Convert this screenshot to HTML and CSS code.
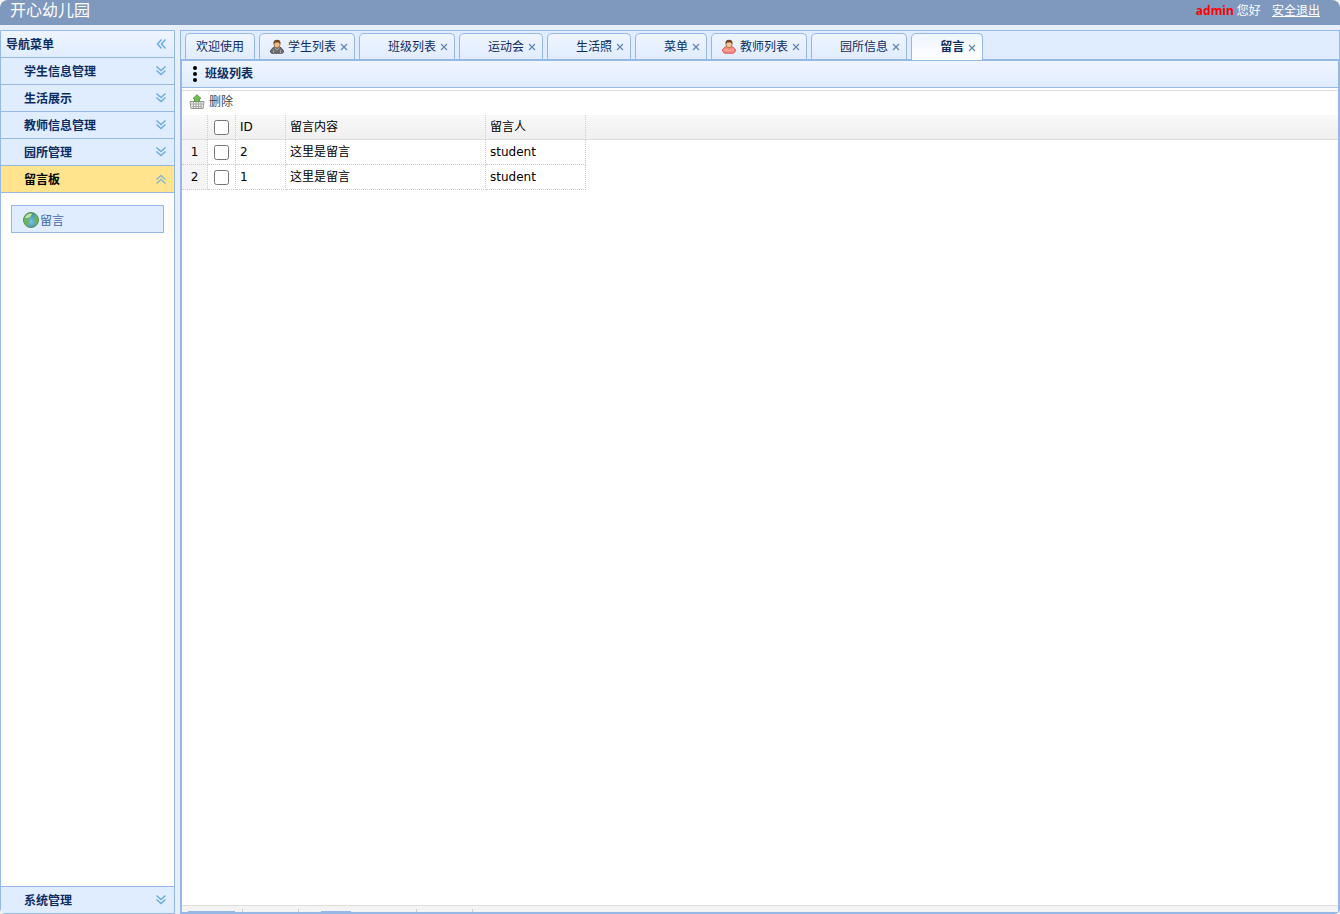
FILE: index.html
```html
<!DOCTYPE html>
<html lang="zh-CN">
<head>
  <meta charset="UTF-8">
  <meta name="viewport" content="width=device-width, initial-scale=1.0">
  <title>开心幼儿园</title>
  <link rel="stylesheet" href="styles.css">
</head>
<body>
  <!-- icons used more than once -->
  <svg class="symbols" aria-hidden="true">
    <symbol id="chevrons" viewBox="0 0 16 16">
      <path d="M3.500 3.500L8 7.500l4.500-4M3.500 7.500l4.500 4 4.500-4" fill="none" stroke="#6caddf" stroke-width="1.5"/>
    </symbol>
    <symbol id="close" viewBox="0 0 8 8">
      <path d="M1 1l6 6M7 1L1 7" fill="none" stroke="#5f83b9" stroke-width="1.2"/>
    </symbol>
  </svg>

  <div class="page">
    <!-- 顶部 -->
    <header class="north">
      <h1>开心幼儿园</h1>
      <div class="user"><strong>admin</strong> 您好 <a href="#">安全退出</a></div>
    </header>

    <div class="main">
      <!-- 导航菜单 -->
      <nav class="west">
        <div class="nav-title">
          <span>导航菜单</span>
          <button type="button" class="collapse" aria-label="收起"><svg class="arrow left"><use href="#chevrons"/></svg></button>
        </div>
        <button type="button" class="nav-item"><span>学生信息管理</span><svg class="arrow"><use href="#chevrons"/></svg></button>
        <button type="button" class="nav-item"><span>生活展示</span><svg class="arrow"><use href="#chevrons"/></svg></button>
        <button type="button" class="nav-item"><span>教师信息管理</span><svg class="arrow"><use href="#chevrons"/></svg></button>
        <button type="button" class="nav-item"><span>园所管理</span><svg class="arrow"><use href="#chevrons"/></svg></button>
        <button type="button" class="nav-item selected"><span>留言板</span><svg class="arrow up"><use href="#chevrons"/></svg></button>
        <div class="nav-body">
          <a href="#" class="nav-link">
            <svg width="18" height="18" viewBox="0 0 18 18">
              <defs>
                <radialGradient id="sea" cx="50%" cy="60%">
                  <stop offset="0" stop-color="#78c3e5"/>
                  <stop offset="1" stop-color="#3f8eb5"/>
                </radialGradient>
              </defs>
              <circle cx="9" cy="9" r="7.5" fill="url(#sea)" stroke="#4f9345"/>
              <path d="M2 9C2 5 5 2 9 2l2 1-2 2-1 2-2 2 1 3-1 3C3 14 2 12 2 9zM12 3c3 1 4 4 4 6 0 3-2 5-4 6l1-4-1-2 1-2z" fill="#6db45a"/>
              <path d="M3 7c1-3 4-5 7-4L8 6l-3 1z" fill="#c3e4b0"/>
            </svg>
            <span>留言</span>
          </a>
        </div>
        <button type="button" class="nav-item last"><span>系统管理</span><svg class="arrow"><use href="#chevrons"/></svg></button>
      </nav>

      <main class="center">
        <ul class="tabs">
          <li><a href="#">欢迎使用</a></li>
          <li>
            <a href="#"><span class="tab-icon"><svg width="16" height="16" viewBox="0 0 16 16">
              <path d="M.5 13c0-2 1.500-4 4-5h5c2.500 1 4 3 4 5l-1 1.200H1.500z" fill="#6d6f70" stroke="#4b4d4e"/>
              <path d="M4.500 8.500L7 11l2.500-2.500M3.500 11v3M10.500 11v3" fill="none" stroke="#a2a5a5"/>
              <ellipse cx="7" cy="5.500" rx="3" ry="3.300" fill="#edbd8c" stroke="#a06d40"/>
              <path d="M3.500 5V3Q4 .8 7 .8T10.500 3v2L9 3.500H5z" fill="#70451f"/>
            </svg></span>学生列表</a>
            <button type="button" aria-label="关闭"><svg><use href="#close"/></svg></button>
          </li>
          <li><a href="#"><span class="tab-icon"></span>班级列表</a><button type="button" aria-label="关闭"><svg><use href="#close"/></svg></button></li>
          <li><a href="#"><span class="tab-icon"></span>运动会</a><button type="button" aria-label="关闭"><svg><use href="#close"/></svg></button></li>
          <li><a href="#"><span class="tab-icon"></span>生活照</a><button type="button" aria-label="关闭"><svg><use href="#close"/></svg></button></li>
          <li><a href="#"><span class="tab-icon"></span>菜单</a><button type="button" aria-label="关闭"><svg><use href="#close"/></svg></button></li>
          <li>
            <a href="#"><span class="tab-icon"><svg width="16" height="16" viewBox="0 0 16 16">
              <path d="M.5 12c0-2 1.500-3.500 4-4.500h5c2.500 1 4 2.500 4 4.500l-2 2.200h-9z" fill="#f98c84" stroke="#d9554f"/>
              <path d="M2.500 10.500Q7 13 11.500 10.500" fill="none" stroke="#ffb0a5"/>
              <ellipse cx="7" cy="5.500" rx="3" ry="3.300" fill="#f3c79a" stroke="#ac7547"/>
              <path d="M3.500 5V3Q4 .8 7 .8T10.500 3v2L9 3.500H5z" fill="#70451f"/>
            </svg></span>教师列表</a>
            <button type="button" aria-label="关闭"><svg><use href="#close"/></svg></button>
          </li>
          <li><a href="#"><span class="tab-icon"></span>园所信息</a><button type="button" aria-label="关闭"><svg><use href="#close"/></svg></button></li>
          <li class="active"><a href="#"><span class="tab-icon"></span>留言</a><button type="button" aria-label="关闭"><svg><use href="#close"/></svg></button></li>
        </ul>

        <section class="panel">
          <h2>
            <svg width="16" height="16" viewBox="0 0 16 16">
              <circle cx="8" cy="2" r="2"/><circle cx="8" cy="8" r="2"/><circle cx="8" cy="14" r="2"/>
            </svg>
            班级列表
          </h2>

          <div class="toolbar">
            <button type="button">
              <svg width="16" height="16" viewBox="0 0 16 16">
                <path d="M1 7.500h14l-1 7H2z" fill="#eeeeec" stroke="#92948f"/>
                <path d="M2 10h12M3 12.500h10M4.500 8v6M7 8v6M9.500 8v6M12 8v6" stroke="#aaaca7" fill="none"/>
                <path d="M8 .7L12 4.500H10.500v3h-5v-3H4z" fill="#75bd53" stroke="#5a9e45"/>
              </svg>
              删除
            </button>
          </div>

          <div class="grid">
            <table>
              <thead>
                <tr>
                  <th class="num"></th>
                  <th class="check"><input type="checkbox" aria-label="全选"></th>
                  <th class="id">ID</th>
                  <th class="message">留言内容</th>
                  <th class="author">留言人</th>
                  <th class="rest"></th>
                </tr>
              </thead>
              <tbody>
                <tr>
                  <td class="num">1</td>
                  <td class="check"><input type="checkbox" aria-label="选择第1行"></td>
                  <td>2</td>
                  <td>这里是留言</td>
                  <td>student</td>
                </tr>
                <tr>
                  <td class="num">2</td>
                  <td class="check"><input type="checkbox" aria-label="选择第2行"></td>
                  <td>1</td>
                  <td>这里是留言</td>
                  <td>student</td>
                </tr>
              </tbody>
            </table>
          </div>

          <!-- 分页 -->
          <div class="pager">
            <select aria-label="每页条数"></select>
            <i class="sep"></i>
            <span class="page-btns"></span>
            <i class="sep"></i>
            <span class="page-num"><input type="text" aria-label="页码"></span>
            <i class="sep"></i>
            <span class="page-btns"></span>
            <i class="sep"></i>
          </div>
        </section>
      </main>
    </div>
  </div>
</body>
</html>
```

FILE: styles.css
```css
* {
  box-sizing: border-box;
}

body {
  margin: 0;
  background: #f3f3f3;
  color: #000;
  font: 12px/16px "DejaVu Sans", "Noto Sans CJK SC", sans-serif;
}

button {
  margin: 0;
  padding: 0;
  border: 0;
  background: none;
  color: inherit;
  font: inherit;
  cursor: pointer;
}

.symbols {
  display: none;
}

.page {
  display: flex;
  flex-direction: column;
  height: 100vh;
  border-radius: 8px 8px 5px 5px;
  overflow: hidden;
  background: #e6eef8;
}

/* header */
.north {
  display: flex;
  justify-content: space-between;
  height: 25px;
  padding: 0 20px 0 10px;
  background: #7f99be;
  color: #fff;
}

.north h1 {
  margin: 0;
  font-size: 16px;
  font-weight: normal;
  line-height: 22px;
}

.user {
  font-family: "Noto Sans", "Noto Sans CJK SC", sans-serif;
  line-height: 21px;
}

.user strong {
  color: #f00;
}

.user a {
  margin-left: 8px;
  color: #fff;
}

.main {
  display: flex;
  flex: 1;
  gap: 5px;
  min-height: 0;
  padding-top: 5px;
}

/* sidebar */
.west {
  display: flex;
  flex-direction: column;
  width: 175px;
  border: 1px solid #95b8e7;
  border-radius: 0 0 0 5px;
  background: #fff;
  color: #0e2d5f;
  font-weight: bold;
}

.nav-title,
.nav-item {
  display: flex;
  justify-content: space-between;
  align-items: center;
  flex: none;
  height: 27px;
  padding: 0 5px;
  border-bottom: 1px solid #95b8e7;
  background: #e0ecff;
}

.nav-title {
  background: linear-gradient(#eff5ff, #e0ecff);
}

.nav-item {
  padding-left: 23px;
  text-align: left;
}

.nav-item.selected {
  background: #ffe48d;
  color: #000;
}

.nav-item.last {
  border-top: 1px solid #95b8e7;
  border-bottom: 0;
}

.west span {
  padding-top: 2px;
}

.arrow {
  display: block;
  width: 16px;
  height: 16px;
}

.arrow.left {
  transform: rotate(90deg);
}

.arrow.up {
  transform: rotate(180deg);
  opacity: 0.8;
}

.nav-body {
  flex: 1;
  padding: 12px 10px;
}

.nav-link {
  display: flex;
  align-items: center;
  height: 28px;
  padding: 2px 0 0 10px;
  border: 1px solid #95b8e7;
  background: #e0ecff;
  color: #416aa3;
  font-weight: normal;
  text-decoration: none;
}

/* tabs */
.center {
  display: flex;
  flex: 1;
  flex-direction: column;
  min-width: 0;
}

.tabs {
  display: flex;
  gap: 4px;
  height: 30px;
  margin: 0;
  padding: 2px 4px 0;
  border: 1px solid #95b8e7;
  background: #e0ecff;
  list-style: none;
}

.tabs li {
  display: flex;
  align-items: center;
  height: 26px;
  padding: 0 10px;
  border: 1px solid #95b8e7;
  border-bottom: 0;
  border-radius: 5px 5px 0 0;
  background: linear-gradient(#eff5ff, #e0ecff);
}

.tabs li.active {
  z-index: 1;
  height: 27px;
  background: linear-gradient(#eff5ff, #fff);
  font-weight: bold;
}

.tabs a {
  display: flex;
  align-items: center;
  color: #0e2d5f;
  text-decoration: none;
}

.tab-icon {
  width: 18px;
  height: 16px;
}

.tabs li button {
  width: 8px;
  height: 8px;
  margin: 1px -4px 0 4px;
}

.tabs li button svg {
  display: block;
  width: 8px;
  height: 8px;
}

/* list panel */
.panel {
  display: flex;
  flex: 1;
  flex-direction: column;
  min-height: 0;
  border: 2px solid #95b8e7;
  border-top-width: 1px;
  border-radius: 0 0 5px 0;
  background: #fff;
}

.panel h2 {
  display: flex;
  align-items: center;
  gap: 2px;
  height: 27px;
  margin: 0;
  padding-left: 5px;
  border-bottom: 1px solid #95b8e7;
  background: linear-gradient(#eff5ff, #e0ecff);
  color: #0e2d5f;
  font-size: 12px;
}

.panel h2 circle {
  fill: #000;
}

.toolbar {
  margin-top: 2px;
  padding: 1px 7px 3px;
  border-top: 1px solid #ddd;
}

.toolbar button {
  display: flex;
  align-items: center;
  gap: 4px;
  height: 20px;
  color: #444;
}

.grid {
  flex: 1;
  min-height: 0;
  overflow: hidden;
}

table {
  width: 100%;
  border-collapse: separate;
  border-spacing: 0;
  table-layout: fixed;
}

th,
td {
  height: 25px;
  padding: 0 4px;
  border-right: 1px dotted #ccc;
  border-bottom: 1px dotted #ccc;
  font-weight: normal;
  text-align: left;
}

thead tr {
  background: linear-gradient(#f9f9f9, #efefef);
}

th {
  border-bottom: 1px solid #ddd;
}

.num {
  width: 26px;
  padding: 0;
  text-align: center;
}

td.num {
  background: #f4f4f4;
}

.check {
  width: 28px;
  padding: 0;
  text-align: center;
}

.check input {
  display: block;
  width: 15px;
  height: 15px;
  margin: 0 auto;
}

.id {
  width: 50px;
}

.message {
  width: 200px;
}

.author {
  width: 100px;
}

.rest {
  border-right: 0;
}

/* pager, only its upper edge stays in view */
.pager {
  display: flex;
  flex: none;
  height: 7px;
  padding: 3px 6px 0;
  border-top: 1px solid #ddd;
  background: #f4f4f4;
  overflow: hidden;
}

.pager select,
.pager input {
  display: block;
  height: 22px;
  margin: 2px 0 0;
  border: 1px solid #95b8e7;
  background: #fff;
}

.pager select {
  width: 47px;
  margin-right: 7px;
}

.pager input {
  width: 30px;
  margin-left: 22px;
}

.sep {
  width: 1px;
  height: 24px;
  background: #ccc;
}

.page-btns {
  width: 55px;
}

.page-num {
  width: 117px;
}
```
